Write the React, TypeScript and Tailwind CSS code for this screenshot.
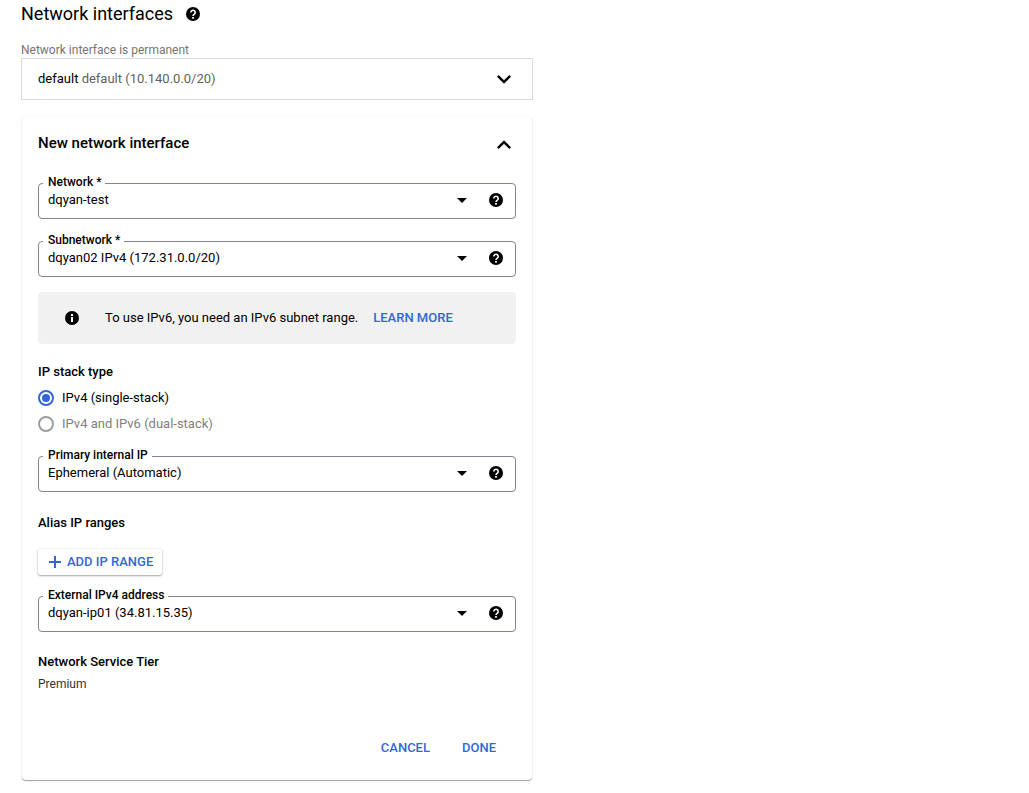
import { useState, type ReactNode } from "react";
import { MdArrowDropDown, MdExpandLess, MdExpandMore } from "react-icons/md";

interface SelectFieldProps {
  id: string;
  label: string;
  options: string[];
}

function HelpIcon() {
  return (
    <svg viewBox="0 0 14 14" className="size-3.5" aria-hidden="true">
      <circle cx="7" cy="7" r="7" fill="currentColor" />
      <path
        d="M4.8 5.4a2.2 2.1 0 1 1 3.5 1.7C7.4 7.7 7 8.1 7 9.1"
        fill="none"
        stroke="#fff"
        strokeWidth="1.6"
      />
      <rect x="6.1" y="10" width="1.8" height="1.7" fill="#fff" />
    </svg>
  );
}

function InfoIcon() {
  return (
    <svg viewBox="0 0 14 14" className="size-3.5 shrink-0" aria-hidden="true">
      <circle cx="7" cy="7" r="7" fill="currentColor" />
      <path d="M6 3h2v2H6zM6 6h2v5H6z" fill="#fff" />
    </svg>
  );
}

function HelpButton({ label }: { label: string }) {
  return (
    <button type="button" aria-label={label} className="shrink-0 cursor-pointer text-black">
      <HelpIcon />
    </button>
  );
}

/** Outlined select with the label sitting in the top border. */
function SelectField({ id, label, options }: SelectFieldProps) {
  return (
    <div className="relative flex h-9 items-center rounded border border-[#80868b] pr-3 pb-0.5">
      <label
        htmlFor={id}
        className="absolute -top-2.5 left-1 bg-white pr-1 pl-[5px] text-xs leading-4 font-medium"
      >
        {label}
      </label>
      <div className="relative flex flex-1 items-center">
        <select
          id={id}
          className="w-full cursor-pointer appearance-none bg-transparent pr-10 pl-[9px] text-[13px] leading-5 outline-none"
        >
          {options.map((o) => (
            <option key={o}>{o}</option>
          ))}
        </select>
        <MdArrowDropDown size={24} className="pointer-events-none absolute right-[15px]" />
      </div>
      <HelpButton label={`Help for ${label}`} />
    </div>
  );
}

function SectionTitle({ children }: { children: ReactNode }) {
  return <h3 className="text-[13px] leading-5 font-medium">{children}</h3>;
}

const radioClass =
  "size-4 shrink-0 appearance-none rounded-full border-2 border-[#3367d6] bg-clip-content p-[2px] checked:bg-[#3367d6] disabled:border-[#9e9e9e]";

export default function App() {
  const [stack, setStack] = useState("ipv4");

  return (
    <main className="w-full max-w-[533px] pb-3 pl-[21px] font-[Roboto,sans-serif] text-black">
      <div className="flex h-7 items-center gap-[13px]">
        <h1 className="text-lg leading-7">Network interfaces</h1>
        <HelpButton label="Help for network interfaces" />
      </div>

      <p className="mt-3.5 text-xs leading-4 text-[#757575]">Network interface is permanent</p>
      <button
        type="button"
        className="flex h-[42px] w-full cursor-pointer items-center justify-between border border-[#dadce0] pr-3.5 pl-4 text-[13px]"
      >
        <span>
          default <span className="text-[#616161]">default (10.140.0.0/20)</span>
        </span>
        <MdExpandMore size={28} />
      </button>

      <section className="mx-px mt-[17px] rounded pt-3.5 pb-4 shadow-[0_1px_0_rgba(0,0,0,0.25),0_1px_2px_rgba(0,0,0,0.15),0_0_1px_rgba(0,0,0,0.1)]">
        <div className="flex items-start justify-between pr-3.5 pl-4">
          <h2 className="text-[15px] leading-6 font-medium">New network interface</h2>
          <button type="button" aria-label="Collapse" className="cursor-pointer">
            <MdExpandLess size={28} />
          </button>
        </div>

        <form className="mt-6 px-4" onSubmit={(e) => e.preventDefault()}>
          <div className="flex flex-col gap-[22px]">
            <SelectField id="network" label="Network *" options={["dqyan-test"]} />
            <SelectField
              id="subnetwork"
              label="Subnetwork *"
              options={["dqyan02 IPv4 (172.31.0.0/20)"]}
            />
          </div>

          <div className="mt-[15px] flex h-[52px] items-center rounded bg-[#f1f1f1] pl-[27px] text-[13px]">
            <InfoIcon />
            <span className="ml-[26px]">To use IPv6, you need an IPv6 subnet range.</span>
            <a href="#" className="ml-[15px] font-medium text-[#3367d6]">
              LEARN MORE
            </a>
          </div>

          <div role="radiogroup" aria-label="IP stack type" className="mt-[18px] text-[13px]">
            <SectionTitle>IP stack type</SectionTitle>
            <label className="mt-[3px] flex h-[26px] items-center gap-2">
              <input
                type="radio"
                name="stack"
                checked={stack === "ipv4"}
                onChange={() => setStack("ipv4")}
                className={radioClass}
              />
              IPv4 (single-stack)
            </label>
            <label className="flex h-[26px] items-center gap-2 text-[#808080]">
              <input type="radio" name="stack" disabled className={radioClass} />
              IPv4 and IPv6 (dual-stack)
            </label>
          </div>

          <div className="mt-[19px] mb-[21px]">
            <SelectField
              id="internal-ip"
              label="Primary internal IP"
              options={["Ephemeral (Automatic)"]}
            />
          </div>

          <SectionTitle>Alias IP ranges</SectionTitle>
          <button
            type="button"
            className="mt-4 mb-[21px] flex h-[26px] cursor-pointer items-center gap-1.5 rounded-[3px] pr-[9px] pl-[11px] text-[13px] font-medium text-[#3367d6] shadow-[0_1px_2px_rgba(0,0,0,0.35),0_0_2px_rgba(0,0,0,0.1)]"
          >
            <svg viewBox="0 0 12 12" className="size-3" aria-hidden="true">
              <path d="M6 0v12M0 6h12" stroke="currentColor" strokeWidth="2" />
            </svg>
            ADD IP RANGE
          </button>

          <div className="mb-5">
            <SelectField
              id="external-ip"
              label="External IPv4 address"
              options={["dqyan-ip01 (34.81.15.35)"]}
            />
          </div>

          <SectionTitle>Network Service Tier</SectionTitle>
          <p className="mt-1 text-xs leading-4 text-[#333]">Premium</p>

          <div className="mt-10 flex justify-end gap-2 px-2 text-[13px] font-medium text-[#3367d6]">
            <button type="button" className="h-8 cursor-pointer px-3">
              CANCEL
            </button>
            <button type="submit" className="h-8 cursor-pointer px-3">
              DONE
            </button>
          </div>
        </form>
      </section>
    </main>
  );
}
